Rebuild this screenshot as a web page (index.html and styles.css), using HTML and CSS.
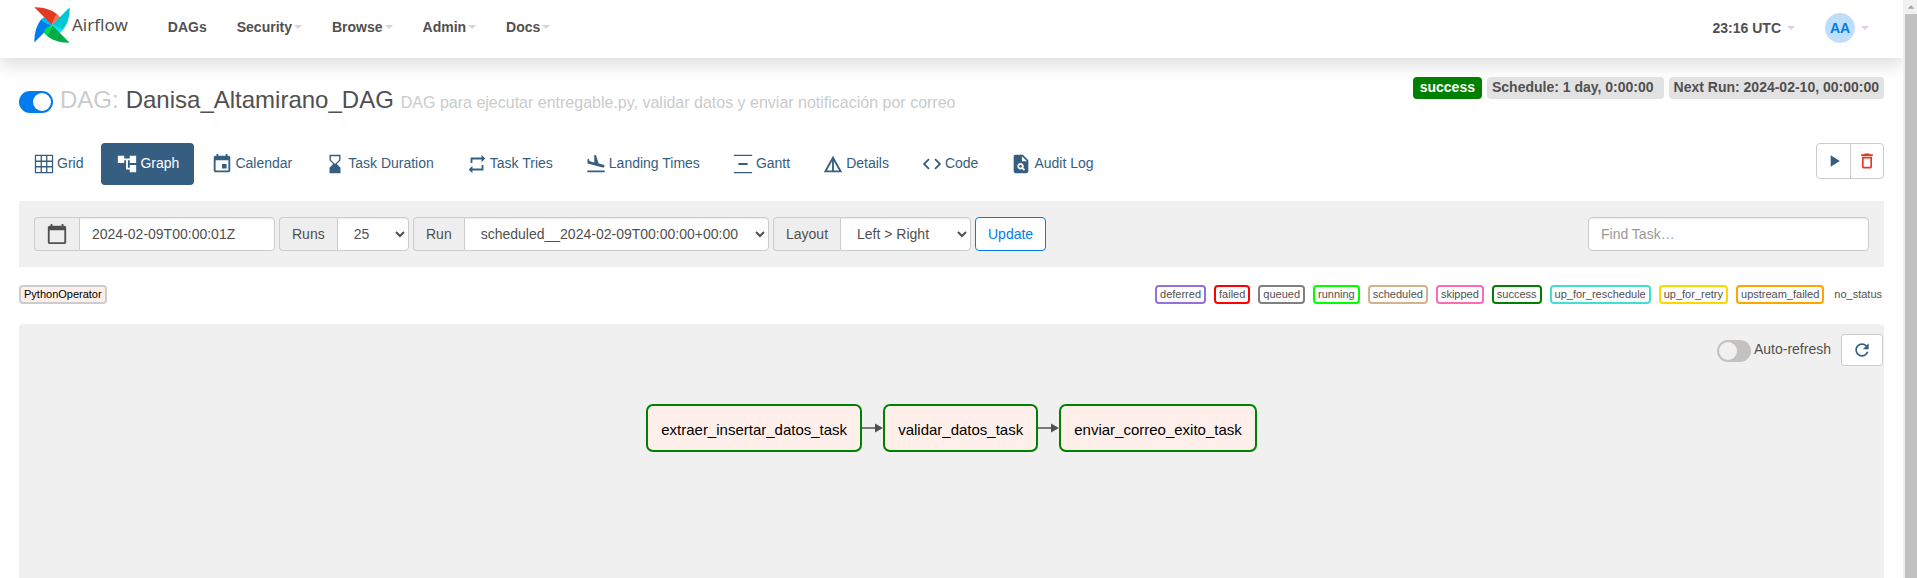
FILE: index.html
```html
<!DOCTYPE html>
<html lang="en">
<head>
<meta charset="utf-8">
<title>Danisa_Altamirano_DAG - Graph - Airflow</title>
<link rel="stylesheet" href="styles.css">
</head>
<body>
<div class="page">
  <header class="navbar">
    <a class="brand" href="#">
      <svg class="brand-mark" viewBox="0 0 36 36" aria-hidden="true">
        <path fill="#017cee" d="M.4 35.6 17.3 18.2C13.6 16.900 11 12.800 7.900 11.800 3 17 .1 26 .4 35.600z"/>
        <path fill="#0cb6ff" d="M17.300 18.200C11.500 16.500 8.500 14.500 7.200 12.700L9.800 10.200C13 10.500 16.500 13 18 18z"/>
        <path fill="#e43921" d="M.3.300 18 18C18.800 14 22 12 24.500 8.800 19 3 10 .100.300.300z"/>
        <path fill="#ff7557" d="M18 18C19 12 21 9 23 7.500L26 10C26.500 13 22 16.500 18 18z"/>
        <path fill="#00c7d4" d="M35.700.300 18 18C21.500 18.500 24 22 27.500 24.300 33 19 36 10 35.700.300z"/>
        <path fill="#11e1ee" d="M18 18C24 19.500 27 21 28.500 23L26 26C22.500 26 19.500 22 18 18z"/>
        <path fill="#00ad46" d="M35.600 35.700 18 18C17.500 22 13 25 11.500 27.500 17 33 26 36 35.600 35.700z"/>
        <path fill="#04d659" d="M18 18C17 24 15 27 13 28.500L10 26C10 22 13.500 20 18 18z"/>
      </svg>
      <span class="brand-name">Airflow</span>
    </a>
    <nav class="menu">
      <a href="#">DAGs</a>
      <a href="#">Security<i class="caret"></i></a>
      <a href="#">Browse<i class="caret"></i></a>
      <a href="#">Admin<i class="caret"></i></a>
      <a href="#">Docs<i class="caret"></i></a>
    </nav>
    <nav class="menu user-menu">
      <a class="clock" href="#">23:16 UTC<i class="caret"></i></a>
      <a class="user" href="#"><span class="avatar">AA</span><i class="caret"></i></a>
    </nav>
  </header>

  <main class="content">
    <div class="heading">
      <h1 class="title">
        <input class="switch" type="checkbox" checked aria-label="Pause/Unpause DAG">
        <span class="muted">DAG:</span>
        <span>Danisa_Altamirano_DAG</span>
        <small class="muted">DAG para ejecutar entregable.py, validar datos y enviar notificación por correo</small>
      </h1>
      <div class="badges">
        <a class="badge badge-success" href="#">success</a>
        <a class="badge badge-wide" href="#">Schedule: 1 day, 0:00:00</a>
        <span class="badge">Next Run: 2024-02-10, 00:00:00</span>
      </div>
    </div>

    <div class="tabs-row">
      <nav class="tabs">
        <a href="#"><svg viewBox="0 0 24 24"><path fill-rule="evenodd" d="M2 2h20v20H2zM3.400 3.400v4.900h4.900V3.400zm6.300 0v4.900h4.600V3.400zm6 0v4.900h4.900V3.400zM3.400 9.700v4.600h4.900V9.700zm6.300 0v4.600h4.600V9.700zm6 0v4.600h4.900V9.700zM3.400 15.700v4.900h4.900v-4.900zm6.300 0v4.900h4.600v-4.900zm6 0v4.900h4.900v-4.900z"/></svg>Grid</a>
        <a class="active" href="#"><svg viewBox="0 0 24 24"><path d="M22 11V3h-7v3H9V3H2v8h7V8h2v10h4v3h7v-8h-7v3h-2V8h2v3z"/></svg>Graph</a>
        <a href="#"><svg viewBox="0 0 24 24"><path d="M17 12h-5v5h5v-5zM16 1v2H8V1H6v2H5c-1.110 0-1.990.900-1.990 2L3 19c0 1.100.890 2 2 2h14c1.100 0 2-.900 2-2V5c0-1.100-.900-2-2-2h-1V1h-2zm3 18H5V8h14v11z"/></svg>Calendar</a>
        <a href="#"><svg viewBox="0 0 24 24"><path fill-rule="evenodd" d="M18 22v-6l-4-4 4-4V2H6v6l4 4-4 4v6h12zM7.500 7.500v-4h9v4L12 12z"/></svg>Task Duration</a>
        <a href="#"><svg viewBox="0 0 24 24"><path d="M7 7h10v3l4-4-4-4v3H5v6h2V7zm10 10H7v-3l-4 4 4 4v-3h12v-6h-2v4z"/></svg>Task Tries</a>
        <a href="#"><svg viewBox="0 0 24 24"><path d="M2.500 19h19v2h-19zM19.340 15.850c.8.210 1.620-.260 1.840-1.060.210-.8-.260-1.620-1.060-1.840l-5.310-1.420-2.760-9.020L10.120 2v8.280L5.150 8.950l-.930-2.320-1.450-.390v5.170l16.570 4.440z"/></svg>Landing Times</a>
        <a href="#"><svg viewBox="0 0 24 24"><path d="M22 2v1.300H2V2h20zM7 11h10v2H7zM2 20.700h20V22H2z"/></svg>Gantt</a>
        <a href="#"><svg viewBox="0 0 24 24"><path d="M12 3 2 21h20L12 3zm1 5.920L18.600 19H13V8.920zm-2 0V19H5.400L11 8.920z"/></svg>Details</a>
        <a href="#"><svg viewBox="0 0 24 24"><path d="M9.400 16.600 4.800 12l4.600-4.600L8 6l-6 6 6 6 1.400-1.400zm5.200 0 4.600-4.600-4.600-4.600L16 6l6 6-6 6-1.400-1.400z"/></svg>Code</a>
        <a href="#"><svg viewBox="0 0 24 24"><path fill-rule="evenodd" d="M14 2H6c-1.100 0-2 .900-2 2v16c0 1.100.900 2 2 2h12c1.100 0 2-.900 2-2V8l-6-6zm1.040 17.450-1.880-1.880c-1.330.710-3.010.530-4.130-.590-1.370-1.370-1.370-3.580 0-4.950 1.370-1.370 3.580-1.370 4.950 0 1.120 1.120 1.310 2.800.590 4.130l1.880 1.880-1.410 1.410zM13 9V3.500L18.500 9H13z"/><circle cx="11.500" cy="14.500" r="1.500"/></svg>Audit Log</a>
      </nav>
      <div class="actions">
        <button type="button" aria-label="Trigger DAG"><svg viewBox="0 0 24 24"><path d="M8 5v14l11-7z"/></svg></button>
        <button type="button" class="danger" aria-label="Delete DAG"><svg viewBox="0 0 24 24"><path d="M6 19c0 1.100.900 2 2 2h8c1.100 0 2-.900 2-2V7H6v12zM8 9h8v10H8V9zm7.500-5-1-1h-5l-1 1H5v2h14V4z"/></svg></button>
      </div>
    </div>

    <form class="filters">
      <div class="group group-date">
        <label for="base-date" aria-label="Base date"><svg viewBox="0 0 24 24"><path d="M20 3h-1V1h-2v2H7V1H5v2H4c-1.100 0-2 .900-2 2v16c0 1.100.900 2 2 2h16c1.100 0 2-.900 2-2V5c0-1.100-.900-2-2-2zm0 18H4V8h16v13z"/></svg></label>
        <input id="base-date" type="text" value="2024-02-09T00:00:01Z">
      </div>
      <div class="group group-runs">
        <label for="runs">Runs</label>
        <select id="runs"><option>25</option></select>
      </div>
      <div class="group group-run">
        <label for="run">Run</label>
        <select id="run"><option>scheduled__2024-02-09T00:00:00+00:00</option></select>
      </div>
      <div class="group group-layout">
        <label for="layout">Layout</label>
        <select id="layout"><option>Left &gt; Right</option></select>
      </div>
      <button class="update" type="button">Update</button>
      <input class="search" type="text" placeholder="Find Task…" aria-label="Find Task">
    </form>

    <div class="legend">
      <span class="tag operator">PythonOperator</span>
      <div class="states">
        <span class="tag deferred">deferred</span>
        <span class="tag failed">failed</span>
        <span class="tag queued">queued</span>
        <span class="tag running">running</span>
        <span class="tag scheduled">scheduled</span>
        <span class="tag skipped">skipped</span>
        <span class="tag success">success</span>
        <span class="tag reschedule">up_for_reschedule</span>
        <span class="tag retry">up_for_retry</span>
        <span class="tag upstream">upstream_failed</span>
        <span class="tag none">no_status</span>
      </div>
    </div>

    <section class="graph">
      <div class="graph-tools">
        <label class="auto"><input class="switch" type="checkbox"><span>Auto-refresh</span></label>
        <button type="button" class="refresh" aria-label="Refresh"><svg viewBox="0 0 24 24"><path d="M17.650 6.350C16.200 4.900 14.210 4 12 4c-4.420 0-7.990 3.580-7.990 8s3.570 8 7.990 8c3.730 0 6.840-2.550 7.730-6h-2.080c-.820 2.330-3.040 4-5.650 4-3.310 0-6-2.690-6-6s2.690-6 6-6c1.660 0 3.140.690 4.220 1.780L13 11h7V4l-2.350 2.350z"/></svg></button>
      </div>
      <div class="flow">
        <div class="node">extraer_insertar_datos_task</div>
        <svg class="edge" viewBox="0 0 21 10"><path d="M0 4.200h14v1.600H0zM13 .500 21 5l-8 4.500z"/></svg>
        <div class="node">validar_datos_task</div>
        <svg class="edge" viewBox="0 0 21 10"><path d="M0 4.200h14v1.600H0zM13 .500 21 5l-8 4.500z"/></svg>
        <div class="node">enviar_correo_exito_task</div>
      </div>
    </section>
  </main>
</div>
<div class="scrollbar" aria-hidden="true"><svg viewBox="0 0 14 14"><path d="M3 9l4-4 4 4z"/></svg><div class="thumb"></div></div>
</body>
</html>
```
FILE: styles.css
```css
* { box-sizing: border-box; }

body {
  margin: 0;
  height: 100vh;
  display: flex;
  overflow: hidden;
  background: #fff;
  color: #51504f;
  font: 14px/20px "Liberation Sans", Arial, sans-serif;
}

a { color: inherit; text-decoration: none; }
svg { display: block; fill: currentColor; flex: none; }
button, input, select { font: inherit; color: inherit; margin: 0; }

.page { flex: 1; min-width: 0; display: flex; flex-direction: column; }

/* Navigation */
.navbar {
  display: flex;
  align-items: center;
  height: 58px;
  padding: 0 19px;
  box-shadow: 0 8px 16px rgba(0, 0, 0, .12);
}
.brand { display: flex; align-items: center; gap: 2px; padding: 0 25px 8px 15px; }
.brand-mark { width: 36px; height: 36px; }
.brand-name { font: 17px/20px "Noto Sans", sans-serif; }
.menu { display: flex; font-weight: bold; padding-bottom: 4px; }
.menu a { display: flex; align-items: center; padding: 0 15px; }
.caret {
  margin-left: 2px;
  border: 4px solid transparent;
  border-top-color: #e0cee0;
  border-bottom: 0;
}
.user-menu { margin-left: auto; padding-bottom: 2px; }
.user-menu .caret { margin-left: 6px; }
.avatar {
  width: 30px;
  line-height: 30px;
  border-radius: 50%;
  background: #bfdefb;
  color: #017cee;
  text-align: center;
}

/* Heading */
.content { flex: 1; display: flex; flex-direction: column; padding: 19px 19px 0; }
.heading { display: flex; justify-content: space-between; align-items: flex-start; }
.title {
  display: flex;
  align-items: baseline;
  gap: 7px;
  margin: 8px 0 0;
  font-size: 24px;
  line-height: 30px;
  font-weight: normal;
}
.title small { font-size: 16px; line-height: 20px; }
.muted { color: #cbcbcb; }
.switch {
  appearance: none;
  width: 34px;
  height: 22px;
  border-radius: 11px;
  background: #c4c2c1;
  padding: 2px;
  display: flex;
}
.switch::before { content: ""; width: 18px; height: 18px; border-radius: 50%; background: #f0f0f0; }
.switch:checked { background: #017cee; justify-content: flex-end; }
.switch:checked::before { background: #fff; }
.title .switch { align-self: center; margin-top: 4px; }
.badges { display: flex; gap: 5px; font-weight: bold; }
.badge { padding: 1px 5px 3px; line-height: 18px; border-radius: 4px; background: #e2e2e2; }
.badge-wide { padding-right: 10px; }
.badge-success { padding-left: 7px; padding-right: 7px; background: #008000; color: #fff; }

/* View tabs */
.tabs-row { display: flex; justify-content: space-between; align-items: flex-start; margin: 28px 0 16px; }
.tabs { display: flex; gap: 2px; color: #355e80; }
.tabs a { display: flex; gap: 2px; height: 42px; padding: 10px 15px; border-radius: 4px; }
.tabs a:first-child { padding: 10px 16px 10px 14px; }
.tabs svg { width: 22px; height: 22px; }
.tabs .active { background: #355e80; color: #fff; }
.actions { display: flex; border: 1px solid #ccc; border-radius: 4px; }
.actions button { width: 33px; height: 34px; padding: 0; border: 0; background: none; color: #355e80; display: flex; align-items: center; justify-content: center; }
.actions button + button { border-left: 1px solid #ccc; }
.actions svg { width: 20px; height: 20px; }
.actions .danger { color: #e43921; }

/* Filters */
.filters { display: flex; gap: 4px; padding: 16px 15px; background: #f0f0f0; }
.filters input, .filters select, .update {
  height: 34px;
  border: 1px solid #ccc;
  border-radius: 4px;
  background-color: #fff;
  padding: 6px 12px;
}
.filters input { box-shadow: inset 0 1px 1px rgba(0, 0, 0, .075); }
.group { display: flex; }
.group label {
  flex: none;
  display: flex;
  align-items: center;
  padding: 0 12px;
  border: 1px solid #ccc;
  border-right: 0;
  border-radius: 4px 0 0 4px;
  background: #eee;
}
.group input, .group select { flex: 1; min-width: 0; border-radius: 0 4px 4px 0; }
.group-date label { padding: 0 11px; }
.group svg { width: 22px; height: 22px; }
.group select { box-shadow: inset 0 1px 1px rgba(0, 0, 0, .075); }
.group-date { width: 241px; }
.group-runs { width: 130px; }
.group-run { width: 356px; }
.group-layout { width: 198px; }
.filters .update { border-color: #017cee; color: #017cee; }
.filters .search { width: 281px; margin-left: auto; }
.search::placeholder { color: #999; opacity: 1; }

/* Legend */
.legend { display: flex; justify-content: space-between; padding: 18px 0 20px; font-size: 11px; line-height: 15px; }
.states { display: flex; gap: 8px; }
.tag { border: 2px solid; border-radius: 4px; padding: 0 3px; }
.tag { border-color: var(--line); }
.operator { --line: #ccc; background: #ffefeb; color: #000; }
.deferred { --line: mediumpurple; }
.failed { --line: red; }
.queued { --line: gray; }
.running { --line: lime; }
.scheduled { --line: tan; }
.skipped { --line: hotpink; }
.success { --line: green; }
.reschedule { --line: turquoise; }
.retry { --line: gold; }
.upstream { --line: orange; }
.none { --line: transparent; padding: 0; }

/* Graph */
.graph { flex: 1; background: #f0f0f0; border-radius: 4px 4px 0 0; }
.graph-tools { display: flex; justify-content: flex-end; gap: 10px; padding: 10px 1px 38px; }
.auto { display: flex; align-items: center; gap: 3px; }
.auto .switch { margin-top: 2px; }
.auto span { padding-bottom: 2px; }
.refresh { width: 42px; height: 32px; padding: 0; border: 1px solid #ccc; border-radius: 3px; background: #fff; color: #355e80; display: flex; align-items: center; justify-content: center; }
.refresh svg { width: 20px; height: 20px; }
.flow { display: flex; justify-content: center; align-items: center; }
.node { padding: 14px 13px 10px; border: 2px solid #008000; border-radius: 7px; background: #ffefeb; color: #000; font-size: 15px; }
.edge { width: 21px; height: 10px; color: #51504f; }

/* Window scroll bar */
.scrollbar { width: 14px; flex: none; display: flex; flex-direction: column; background: #f1f1f1; color: #a3a3a3; padding-left: 2px; }
.scrollbar svg { width: 12px; height: 14px; }
.thumb { flex: 1; background: #c1c1c1; }
```
